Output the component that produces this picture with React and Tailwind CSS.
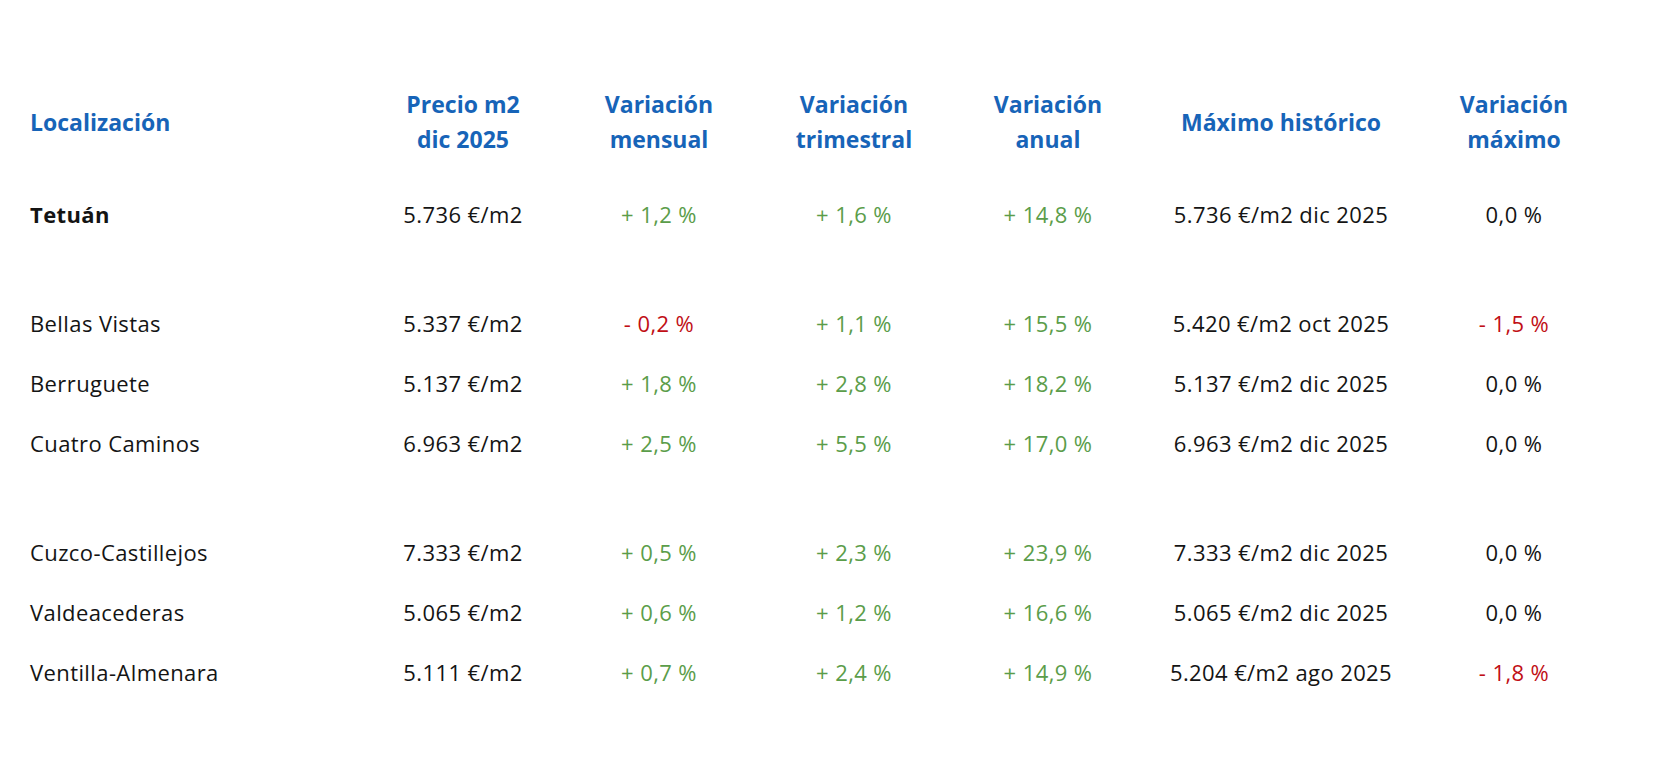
const headers = [
  ['Localización'],
  ['Precio m2', 'dic 2025'],
  ['Variación', 'mensual'],
  ['Variación', 'trimestral'],
  ['Variación', 'anual'],
  ['Máximo histórico'],
  ['Variación', 'máximo'],
];

// null = empty spacer row
const rows = [
  { name: 'Tetuán', bold: true, price: '5.736 €/m2', m: '+ 1,2 %', t: '+ 1,6 %', a: '+ 14,8 %', max: '5.736 €/m2 dic 2025', vmax: '0,0 %' },
  null,
  { name: 'Bellas Vistas', price: '5.337 €/m2', m: '- 0,2 %', t: '+ 1,1 %', a: '+ 15,5 %', max: '5.420 €/m2 oct 2025', vmax: '- 1,5 %' },
  { name: 'Berruguete', price: '5.137 €/m2', m: '+ 1,8 %', t: '+ 2,8 %', a: '+ 18,2 %', max: '5.137 €/m2 dic 2025', vmax: '0,0 %' },
  { name: 'Cuatro Caminos', price: '6.963 €/m2', m: '+ 2,5 %', t: '+ 5,5 %', a: '+ 17,0 %', max: '6.963 €/m2 dic 2025', vmax: '0,0 %' },
  null,
  { name: 'Cuzco-Castillejos', price: '7.333 €/m2', m: '+ 0,5 %', t: '+ 2,3 %', a: '+ 23,9 %', max: '7.333 €/m2 dic 2025', vmax: '0,0 %' },
  { name: 'Valdeacederas', price: '5.065 €/m2', m: '+ 0,6 %', t: '+ 1,2 %', a: '+ 16,6 %', max: '5.065 €/m2 dic 2025', vmax: '0,0 %' },
  { name: 'Ventilla-Almenara', price: '5.111 €/m2', m: '+ 0,7 %', t: '+ 2,4 %', a: '+ 14,9 %', max: '5.204 €/m2 ago 2025', vmax: '- 1,8 %' },
];

const cols = 'grid grid-cols-[335px_196px_196px_194px_194px_272px_194px]';

const varColor = (v) => {
  if (v.startsWith('+')) return 'text-[#5b9d4a]';
  if (v.startsWith('-')) return 'text-[#c10f16]';
  return 'text-[#141414]';
};

export default function App() {
  return (
    <div className="min-h-screen bg-white pl-[30px] pt-[87px] font-['Open_Sans',sans-serif]">
      {/* Header */}
      <div className={`${cols} h-[70px] items-center mb-[27px] text-[#1764b8] text-[23px] font-bold leading-[35px]`}>
        {headers.map((h, i) => (
          <div key={i} className={i === 0 ? 'text-left' : 'text-center'}>
            {h.map((line) => (
              <div key={line}>{line}</div>
            ))}
          </div>
        ))}
      </div>

      {/* Rows */}
      {rows.map((r, i) =>
        r === null ? (
          <div key={i} className="h-[49px]" />
        ) : (
          <div key={i} className={`${cols} h-[60px] items-center text-[22px] tracking-[0.4px] text-[#141414]`}>
            <div className={r.bold ? 'font-bold' : ''}>{r.name}</div>
            <div className="text-center">{r.price}</div>
            <div className={`text-center ${varColor(r.m)}`}>{r.m}</div>
            <div className={`text-center ${varColor(r.t)}`}>{r.t}</div>
            <div className={`text-center ${varColor(r.a)}`}>{r.a}</div>
            <div className="text-center">{r.max}</div>
            <div className={`text-center ${varColor(r.vmax)}`}>{r.vmax}</div>
          </div>
        )
      )}
    </div>
  );
}
